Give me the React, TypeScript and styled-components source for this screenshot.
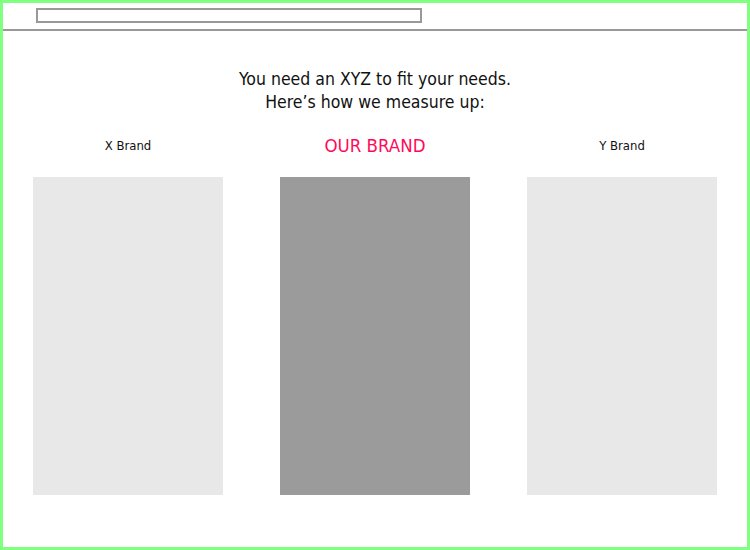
import styled, { createGlobalStyle } from "styled-components";

const GlobalStyle = createGlobalStyle`
  html, body {
    margin: 0;
    padding: 0;
    background: #ffffff;
  }
  * {
    box-sizing: border-box;
  }
`;

const brands = [
  { name: "X Brand", featured: false },
  { name: "OUR BRAND", featured: true },
  { name: "Y Brand", featured: false },
];

const App = () => {
  return (
    <>
      <GlobalStyle />
      <Frame>
        <TopBar>
          <SearchField />
        </TopBar>
        <Main>
          <Headline>
            You need an XYZ to fit your needs.
            <br />
            Here’s how we measure up:
          </Headline>
          <Columns>
            {brands.map((brand) => (
              <Column key={brand.name}>
                <BrandName $featured={brand.featured}>{brand.name}</BrandName>
                <Panel $featured={brand.featured} />
              </Column>
            ))}
          </Columns>
        </Main>
      </Frame>
    </>
  );
};

const Frame = styled.div`
  width: 750px;
  height: 550px;
  border: 3px solid #80ff80;
  display: flex;
  flex-direction: column;
  font-family: "DejaVu Sans Condensed", "DejaVu Sans", sans-serif;
  color: #111111;
`;

const TopBar = styled.header`
  height: 28px;
  border-bottom: 2px solid #999999;
  padding: 5px 0 0 33px;
`;

const SearchField = styled.div`
  width: 386px;
  height: 15px;
  border: 2px solid #999999;
`;

const Main = styled.main`
  flex: 1;
  display: flex;
  flex-direction: column;
  align-items: center;
  padding-top: 37px;
`;

const Headline = styled.h1`
  margin: 0;
  font-size: 17.5px;
  font-weight: 400;
  line-height: 23px;
  text-align: center;
  letter-spacing: 0;
`;

const Columns = styled.div`
  display: grid;
  grid-template-columns: repeat(3, 190px);
  column-gap: 57px;
  margin-top: 19px;
`;

const Column = styled.section`
  display: flex;
  flex-direction: column;
  align-items: center;
`;

const BrandName = styled.h2<{ $featured: boolean }>`
  margin: 0;
  height: 44px;
  display: flex;
  align-items: flex-end;
  font-weight: 400;
  line-height: 1.2;
  font-size: ${(p) => (p.$featured ? "18.5px" : "13px")};
  color: ${(p) => (p.$featured ? "#ff0a5a" : "#111111")};
  padding-bottom: ${(p) => (p.$featured ? "20px" : "23px")};
`;

const Panel = styled.div<{ $featured: boolean }>`
  width: 190px;
  height: 318px;
  background: ${(p) => (p.$featured ? "#9b9b9b" : "#e8e8e8")};
`;

export default App;
